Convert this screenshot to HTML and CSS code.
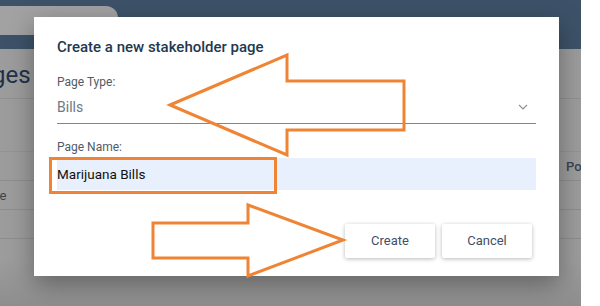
FILE: index.html
```html
<!DOCTYPE html>
<html lang="en">
<head>
    <meta charset="UTF-8">
    <title>Stakeholder pages</title>
    <link rel="stylesheet" href="styles.css">
</head>
<body>
    <div class="page">
        <div class="topbar">
            <div class="tab"></div>
        </div>
        <div class="heading"><h1>Pages</h1></div>
        <div class="spacer"></div>
        <div class="row head_row"><span class="cell_left"></span><span class="cell_right">Position</span></div>
        <div class="row"><span class="cell_left cut">Page</span><span class="cell_right"></span></div>
        <div class="row"><span class="cell_left"></span><span class="cell_right"></span></div>

        <div class="dialog">
            <div class="title">Create a new stakeholder page</div>
            <div class="label first">Page Type:</div>
            <div class="select">
                <span>Bills</span>
                <svg class="chevron" width="10" height="6" viewBox="0 0 10 6"><path d="M1 1 L5 5 L9 1" fill="none" stroke="#8a949e" stroke-width="1.2"/></svg>
            </div>
            <div class="label">Page Name:</div>
            <div class="input">Marijuana Bills</div>
            <div class="actions">
                <div class="btn">Create</div>
                <div class="btn">Cancel</div>
            </div>
        </div>
    </div>

    <svg class="marks" width="600" height="306" viewBox="0 0 600 306">
        <g fill="none" stroke="#ef8434" stroke-width="3" stroke-linejoin="miter">
            <rect x="50.5" y="158.5" width="225" height="34"/>
            <polygon points="170,105 287,55 287,81 404,81 404,130 287,130 287,155"/>
            <polygon points="153,223 248,223 248,205 343,240 248,276 248,258 153,258"/>
        </g>
    </svg>
</body>
</html>
```

FILE: styles.css
```css
*{
    padding: 0;
    margin: 0;
    box-sizing: border-box;
}

body{
    width: 600px;
    height: 306px;
    overflow: hidden;
    background-color: #fff;
    font-family: Roboto, "Liberation Sans", sans-serif;
    position: relative;
}

.page{
    position: relative;
    width: 581px;
    height: 306px;
    overflow: hidden;
    background: linear-gradient(#9c9c9c 0, #9c9c9c 260px, #8e8e8e 306px);
}

.topbar{
    height: 49px;
    padding-top: 6px;
    background-color: #3d5269;
}

.topbar .tab{
    width: 118px;
    height: 29px;
    background-color: #a2a2a2;
    border-top-right-radius: 12px;
}

.heading{
    height: 50px;
    padding-top: 10px;
    border-bottom: 1px solid #909090;
    overflow: hidden;
}

.heading h1{
    font-size: 24px;
    font-weight: 400;
    line-height: 32px;
    color: #1f3148;
    margin-left: -36px;
}

.spacer{
    height: 53px;
    border-bottom: 1px solid #939393;
}

.row{
    display: flex;
    justify-content: space-between;
    align-items: center;
    height: 29px;
    border-bottom: 1px solid #8d8d8d;
    font-size: 13px;
    color: #3b4450;
}

.head_row{
    height: 29px;
    font-weight: 500;
}

.row .cut{
    margin-left: -23px;
}

.row .cell_right{
    width: 60px;
    margin-right: -45px;
}

.dialog{
    position: absolute;
    left: 34px;
    top: 17px;
    width: 525px;
    height: 259px;
    padding: 20px 23px 18px 23px;
    background-color: #fff;
    box-shadow: 0 8px 24px rgba(0,0,0,0.35);
    display: flex;
    flex-direction: column;
}

.dialog .title{
    font-size: 15px;
    font-weight: 500;
    line-height: 20px;
    color: #23384f;
}

.dialog .label{
    margin-top: 16px;
    font-size: 12px;
    line-height: 14px;
    color: #515b67;
}

.dialog .label.first{
    margin-top: 18px;
}

.dialog .select{
    display: flex;
    justify-content: space-between;
    align-items: center;
    height: 35px;
    padding: 8px 8px 6px 0;
    border-bottom: 1px solid #7b8894;
    font-size: 14px;
    line-height: 20px;
    color: #6c7988;
}

.dialog .input{
    margin-top: 4px;
    height: 32px;
    line-height: 32px;
    background-color: #e8f0fe;
    font-size: 13.5px;
    color: #111;
}

.dialog .actions{
    display: flex;
    justify-content: flex-end;
    gap: 7px;
    margin-top: 34px;
    padding-right: 4px;
}

.dialog .btn{
    width: 90px;
    height: 34px;
    line-height: 34px;
    text-align: center;
    font-size: 13px;
    color: #3f5068;
    background-color: #fff;
    border-radius: 2px;
    box-shadow: 0 1px 4px rgba(0,0,0,0.28);
}

.marks{
    position: absolute;
    left: 0;
    top: 0;
}
```
